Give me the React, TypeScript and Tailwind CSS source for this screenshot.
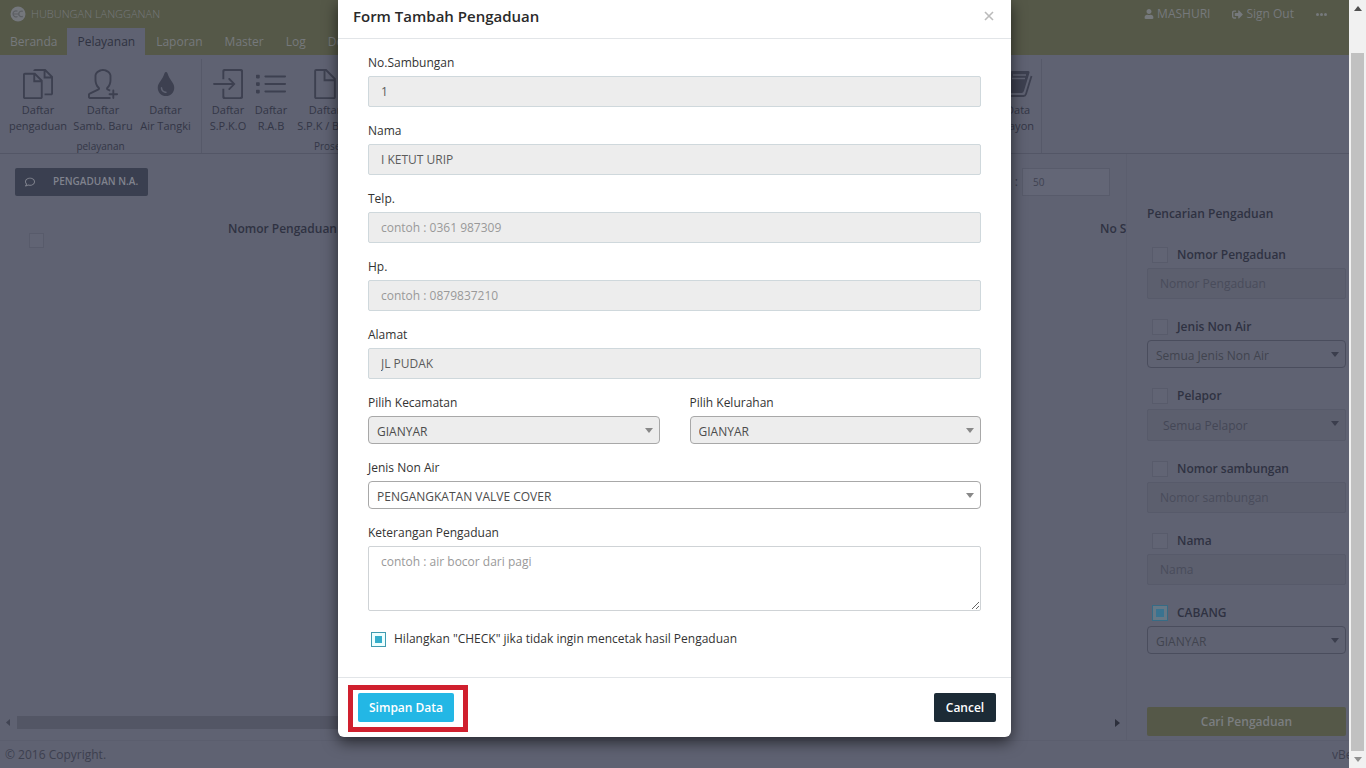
import type { ReactNode } from "react";
import { SlDocs, SlUserFollow, SlLogin, SlList, SlDoc } from "react-icons/sl";
import { FaTint, FaRegComment, FaUser, FaSignOutAlt } from "react-icons/fa";

const FONT = "font-['Open_Sans','Noto_Sans',sans-serif]";

function Logo() {
  return (
    <svg viewBox="0 0 16 16" className="size-4" aria-hidden="true">
      <circle cx="8" cy="8" r="7.5" fill="#74777c" />
      <path d="M7.5 5.2A3 3 0 1 0 7.5 10.4M2.5 8h7M12.8 5.4A2.8 2.8 0 1 0 12.8 10.4" fill="none" stroke="#5c5f63" strokeWidth="1.2" />
    </svg>
  );
}

function BookIcon() {
  return (
    <svg viewBox="0 0 30 28" className="h-[28px] w-[30px]" aria-hidden="true">
      <path d="M9 1h16q2 0 1.400 2l-5.500 18q-.6 2-2.400 2H4q-2 0-1.500-2L7 3q.6-2 2-2z" fill="#3d4050" />
      <path d="M10 5h13M9 8.500h13" stroke="#5f6272" strokeWidth="1.500" />
      <path d="M28.500 6l-5.500 18q-.6 2-2.500 2H4" fill="none" stroke="#3d4050" strokeWidth="1.800" />
    </svg>
  );
}

function Caret({ className }: { className: string }) {
  return (
    <svg viewBox="0 0 8 5" className={`pointer-events-none absolute h-[5px] w-2 ${className}`} aria-hidden="true">
      <path d="M0 0h8L4 5z" fill="currentColor" />
    </svg>
  );
}

function RibbonItem({ icon, top, bottom, className = "" }: { icon: ReactNode; top: string; bottom: string; className?: string }) {
  return (
    <button type="button" className={`flex shrink-0 flex-col items-center whitespace-nowrap text-[11px] leading-4 text-[#333646] ${className}`}>
      <span className="flex h-9 items-center justify-center text-[30px] text-[#3d4050]">{icon}</span>
      <span>{top}</span>
      <span>{bottom}</span>
    </button>
  );
}

function Field({ id, label, value, placeholder }: { id: string; label: string; value?: string; placeholder?: string }) {
  return (
    <div className="mb-[15px]">
      <label htmlFor={id} className="mb-1 block leading-[18px]">{label}</label>
      <input
        id={id}
        readOnly
        defaultValue={value}
        placeholder={placeholder}
        className="block h-[31px] w-full rounded-[2px] border border-[#cfd8dc] bg-[#ededed] px-3 text-[#5c5c5c] outline-none placeholder:text-[#999]"
      />
    </div>
  );
}

function SelectField({ id, label, value, disabled = false }: { id: string; label: string; value: string; disabled?: boolean }) {
  return (
    <div className="mb-[15px] flex-1">
      <label htmlFor={id} className="mb-1 block leading-[18px]">{label}</label>
      <div className="relative">
        <select
          id={id}
          className={`block h-7 w-full appearance-none rounded-[4px] border border-[#a8a8a8] px-2 pt-1 text-[#4c4c4c] outline-none ${disabled ? "bg-[#ededed]" : "bg-white"}`}
        >
          <option>{value}</option>
        </select>
        <Caret className="right-[7px] top-3 text-[#888]" />
      </div>
    </div>
  );
}

type Filter = { id: string; label: string; value: string; kind: "input" | "select" | "native"; checked?: boolean };

const filters: Filter[] = [
  { id: "f-nomor", label: "Nomor Pengaduan", value: "Nomor Pengaduan", kind: "input" },
  { id: "f-jenis", label: "Jenis Non Air", value: "Semua Jenis Non Air", kind: "select" },
  { id: "f-pelapor", label: "Pelapor", value: "Semua Pelapor", kind: "native" },
  { id: "f-sambungan", label: "Nomor sambungan", value: "Nomor sambungan", kind: "input" },
  { id: "f-nama", label: "Nama", value: "Nama", kind: "input" },
  { id: "f-cabang", label: "CABANG", value: "GIANYAR", kind: "select", checked: true },
];

const filterBox: Record<Filter["kind"], string> = {
  input: "",
  select: "h-7 rounded-[4px] border-[#4a4d5d] px-2 pt-1 text-[#41444f]",
  native: "h-8 rounded-[2px] border-[#575a6a] bg-[#5c5f6e] px-[15px] pt-0.5 text-[#444756]",
};

function FilterRow({ id, label, value, kind, checked = false }: Filter) {
  return (
    <div className="mb-[19px]">
      <div className="mb-1 flex h-[18px] items-center gap-[9px] pl-[5px] font-semibold text-[#2f3242]">
        <input
          id={`${id}-on`}
          type="checkbox"
          defaultChecked={checked}
          className="size-4 appearance-none border border-[#585b6b] bg-[#616474] checked:border-[#376b85] checked:bg-[#3a7390] checked:shadow-[inset_0_0_0_3px_#667886]"
        />
        <label htmlFor={`${id}-on`}>{label}</label>
      </div>
      {kind === "input" ? (
        <input
          aria-label={label}
          placeholder={value}
          className="block h-[31px] w-full rounded-[2px] border border-[#575a6a] bg-[#5c5f6e] px-3 outline-none placeholder:text-[#494c5b]"
        />
      ) : (
        <div className="relative">
          <select aria-label={label} className={`block w-full appearance-none border outline-none ${filterBox[kind]}`}>
            <option>{value}</option>
          </select>
          <Caret className="right-[7px] top-3 text-[#3b3e4d]" />
        </div>
      )}
    </div>
  );
}

const tabs = ["Laporan", "Master", "Log", "Download"];

function TopBar() {
  return (
    <header className="bg-[#555848] text-[#76797c]">
      <div className="flex h-7 items-center justify-between pl-[10px]">
        <div className="flex items-center gap-[5px] text-[11px]">
          <Logo />
          <span className="font-light">HUBUNGAN LANGGANAN</span>
        </div>
        <div className="flex items-center gap-[22px] pr-[22px] text-xs">
          <a href="#user" className="flex items-center gap-[3px]"><FaUser className="size-[10px]" />MASHURI</a>
          <a href="#out" className="flex items-center gap-[3px]"><FaSignOutAlt className="size-[11px]" />Sign Out</a>
          <button type="button" aria-label="Menu" className="flex gap-[1px]">
            <i className="size-[3px] rounded-full bg-current" />
            <i className="size-[3px] rounded-full bg-current" />
            <i className="size-[3px] rounded-full bg-current" />
          </button>
        </div>
      </div>
      <nav className="flex h-[27px] items-stretch text-xs">
        <a href="#beranda" className="flex items-center px-[10px]">Beranda</a>
        <a href="#pelayanan" className="flex items-center bg-[#5f6272] px-[10px] text-[#2f3241]">Pelayanan</a>
        {tabs.map((t) => (
          <a key={t} href={`#${t}`} className="flex items-center px-[11px]">{t}</a>
        ))}
      </nav>
    </header>
  );
}

function Ribbon() {
  return (
    <div className="flex h-[99px] shrink-0 border-b border-[#535666] pt-1">
      <section className="flex w-[202px] shrink-0 flex-col border-r border-[#565969]">
        <div className="flex h-[80px] items-start pl-[7px] pt-[7px]">
          <RibbonItem className="w-[62px]" icon={<SlDocs />} top="Daftar" bottom="pengaduan" />
          <RibbonItem className="w-[68px]" icon={<SlUserFollow />} top="Daftar" bottom="Samb. Baru" />
          <RibbonItem className="w-[57px]" icon={<FaTint className="size-6" />} top="Daftar" bottom="Air Tangki" />
        </div>
        <p className="text-center text-[10px] leading-[14px] text-[#343747]">pelayanan</p>
      </section>
      <section className="flex w-[840px] shrink-0 flex-col border-r border-[#565969]">
        <div className="flex h-[80px] items-start pl-1 pr-[7px] pt-[7px]">
          <RibbonItem className="w-[44px]" icon={<SlLogin />} top="Daftar" bottom="S.P.K.O" />
          <RibbonItem className="w-[42px]" icon={<SlList />} top="Daftar" bottom="R.A.B" />
          <RibbonItem className="w-[66px]" icon={<SlDoc />} top="Daftar" bottom="S.P.K / BAP" />
          <RibbonItem className="ml-auto" icon={<BookIcon />} top="Data" bottom="Rayon" />
        </div>
        <p className="pl-28 text-[10px] leading-[14px] text-[#343747]">Proses</p>
      </section>
    </div>
  );
}

function ListPane() {
  return (
    <section className="flex min-w-0 flex-1 flex-col border-r border-[#5b5e6e]">
      <div className="flex items-center justify-between pl-[15px] pr-4 pt-[14px]">
        <button type="button" className="flex h-7 items-center gap-[18px] rounded-[2px] bg-[#3a3f50] px-[10px] text-[10px] font-semibold text-[#80838e]">
          <FaRegComment className="size-[10px]" />
          PENGADUAN N.A.
        </button>
        <label className="flex items-center gap-1 text-[#393c4c]">
          :
          <input defaultValue="50" className="h-7 w-[88px] border border-[#585b6b] bg-[#636676] px-[10px] text-[10px] text-[#3f4251] outline-none" />
        </label>
      </div>
      <div className="flex-1 overflow-hidden pt-5">
        <table className="w-[1400px] table-fixed text-left text-[#2f3242]">
          <thead>
            <tr className="align-top">
              <th className="w-[228px] pl-[29px] pt-[17px]">
                <input type="checkbox" aria-label="Pilih semua" className="block size-[15px] appearance-none border border-[#585b6b] bg-[#616474]" />
              </th>
              <th className="w-[872px] pt-1 font-semibold leading-[18px]">Nomor Pengaduan</th>
              <th className="pt-1 font-semibold leading-[18px]">No Sambungan</th>
            </tr>
          </thead>
        </table>
      </div>
      <div className="mb-[9px] flex h-[17px] items-center justify-between pr-1.5 text-[#414453]">
        <svg viewBox="0 0 17 17" className="h-[17px] w-[17px]" aria-hidden="true"><path d="M10 5v7L6 8.500z" fill="currentColor" /></svg>
        <div className="h-[13px] w-[600px] bg-[#535665]" />
        <span className="flex-1" />
        <svg viewBox="0 0 5 8" className="h-2 w-[5px]" aria-hidden="true"><path d="M0 0v8l5-4z" fill="#2d303c" /></svg>
      </div>
    </section>
  );
}

function SearchPane() {
  return (
    <aside className="w-[222px] shrink-0 pl-5 pr-[3px] pt-[51px]">
      <h2 className="mb-[23px] font-semibold leading-[18px] text-[#2f3242]">Pencarian Pengaduan</h2>
      {filters.map((f) => (
        <FilterRow key={f.id} {...f} />
      ))}
      <button type="button" className="mt-[53px] block h-[29px] w-full rounded-[2px] bg-[#555848] font-semibold text-[#7b7e80]">Cari Pengaduan</button>
    </aside>
  );
}

function ComplaintDialog() {
  return (
    <div className="absolute inset-0 flex items-start justify-center">
      <div role="dialog" aria-label="Form Tambah Pengaduan" className="w-[673px] rounded-b-[6px] bg-white text-[#333] shadow-[0_5px_15px_rgba(0,0,0,0.6)]">
        <div className="flex h-[39px] items-center justify-between border-b border-[#e2e5e8] pb-1.5 pl-[15px] pr-4">
          <h1 className="text-[15px] font-semibold text-[#2a2a2a]">Form Tambah Pengaduan</h1>
          <button type="button" aria-label="Tutup" className="text-[#bbb]">
            <svg viewBox="0 0 12 12" className="size-3" aria-hidden="true"><path d="M2 2l8 8M10 2l-8 8" stroke="currentColor" strokeWidth="1.600" /></svg>
          </button>
        </div>
        <form className="px-[30px] pb-[29px] pt-[15px]">
          <Field id="no" label="No.Sambungan" value="1" />
          <Field id="nama" label="Nama" value="I KETUT URIP" />
          <Field id="telp" label="Telp." placeholder="contoh : 0361 987309" />
          <Field id="hp" label="Hp." placeholder="contoh : 0879837210" />
          <Field id="alamat" label="Alamat" value="JL PUDAK" />
          <div className="flex gap-[30px]">
            <SelectField id="kec" label="Pilih Kecamatan" value="GIANYAR" disabled />
            <SelectField id="kel" label="Pilih Kelurahan" value="GIANYAR" disabled />
          </div>
          <SelectField id="jenis" label="Jenis Non Air" value="PENGANGKATAN VALVE COVER" />
          <label htmlFor="ket" className="mb-1 block leading-[18px]">Keterangan Pengaduan</label>
          <textarea
            id="ket"
            placeholder="contoh : air bocor dari pagi"
            className="block h-[65px] w-full rounded-[2px] border border-[#cfd3d6] px-3 py-1.5 leading-[18px] outline-none placeholder:text-[#999]"
          />
          <div className="mt-[19px] flex h-[18px] items-center gap-2 pl-[3px]">
            <input
              id="cetak"
              type="checkbox"
              defaultChecked
              className="size-[15px] appearance-none border border-[#3f9bb0] bg-white checked:bg-[#35aecb] checked:shadow-[inset_0_0_0_3px_#ecffff]"
            />
            <label htmlFor="cetak">Hilangkan "CHECK" jika tidak ingin mencetak hasil Pengaduan</label>
          </div>
        </form>
        <div className="flex justify-between border-t border-[#e2e5e8] pb-[15px] pl-5 pr-[15px] pt-[15px]">
          <div className="relative">
            <button type="button" className="h-[29px] w-24 rounded-[2px] bg-[#23b7e5] font-semibold text-white">Simpan Data</button>
            <span className="pointer-events-none absolute -bottom-[10px] -left-[10px] -right-[14px] -top-2 border-[5px] border-[#d0202e]" />
          </div>
          <button type="button" className="h-[29px] w-[62px] rounded-[2px] bg-[#1c2b36] font-semibold text-white">Cancel</button>
        </div>
      </div>
    </div>
  );
}

function PageScrollbar() {
  return (
    <div className="flex w-[17px] shrink-0 flex-col items-center bg-[#f1f1f1]" aria-hidden="true">
      <svg viewBox="0 0 8 5" className="mb-[42px] mt-1.5 h-[5px] w-2"><path d="M0 5h8L4 0z" fill="#505050" /></svg>
      <div className="w-[13px] flex-1 bg-[#c1c1c1]" />
      <svg viewBox="0 0 8 5" className="my-1.5 h-[5px] w-2"><path d="M0 0h8L4 5z" fill="#909090" /></svg>
    </div>
  );
}

export default function App() {
  return (
    <div className={`flex h-screen overflow-hidden bg-[#5f6272] text-xs ${FONT}`}>
      <div className="relative flex min-w-0 flex-1 flex-col overflow-hidden">
        <TopBar />
        <Ribbon />
        <main className="flex min-h-0 flex-1">
          <ListPane />
          <SearchPane />
        </main>
        <footer className="flex h-7 shrink-0 items-center justify-between overflow-hidden border-t border-[#5b5e6e] pl-[5px] text-[#3d404f]">
          <span>© 2016 Copyright.</span>
          <span className="w-[17px] overflow-hidden whitespace-nowrap">vBeta</span>
        </footer>
        <ComplaintDialog />
      </div>
      <PageScrollbar />
    </div>
  );
}
